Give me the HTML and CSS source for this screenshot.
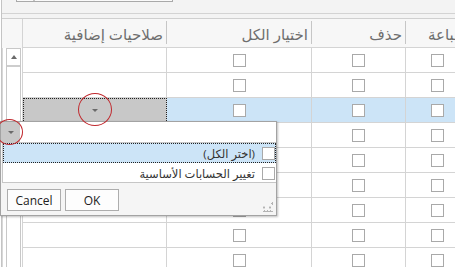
FILE: index.html
```html
<!DOCTYPE html>
<html lang="ar">
<head>
  <meta charset="UTF-8" />
  <title>صلاحيات المستخدم</title>
  <link rel="stylesheet" href="styles.css">
</head>
<body>
  <div class="editor">
    <div class="toolbar">
      <div class="search"><span class="search-btn"></span></div>
    </div>

    <div class="grid">
      <div class="side">
        <div class="side-head"></div>
        <div class="vscroll">
          <div class="vscroll-up"><span class="tri-up"></span></div>
        </div>
      </div>

      <div class="cols">
        <div class="row head">
          <div class="cell"><span class="rtl">صلاحيات إضافية</span></div>
          <div class="cell"><span class="rtl">اختيار الكل</span></div>
          <div class="cell"><span class="rtl">حذف</span></div>
          <div class="cell"><span class="rtl">طباعة</span></div>
        </div>
        <div class="row"><div class="cell"></div><div class="cell"><span class="check"></span></div><div class="cell"><span class="check"></span></div><div class="cell"><span class="check"></span></div></div>
        <div class="row"><div class="cell"></div><div class="cell"><span class="check"></span></div><div class="cell"><span class="check"></span></div><div class="cell"><span class="check"></span></div></div>
        <div class="row sel"><div class="cell drop"><span class="tri-down"></span></div><div class="cell"><span class="check"></span></div><div class="cell"><span class="check"></span></div><div class="cell"><span class="check"></span></div></div>
        <div class="row"><div class="cell"></div><div class="cell"><span class="check"></span></div><div class="cell"><span class="check"></span></div><div class="cell"><span class="check"></span></div></div>
        <div class="row"><div class="cell"></div><div class="cell"><span class="check"></span></div><div class="cell"><span class="check"></span></div><div class="cell"><span class="check"></span></div></div>
        <div class="row"><div class="cell"></div><div class="cell"><span class="check"></span></div><div class="cell"><span class="check"></span></div><div class="cell"><span class="check"></span></div></div>
        <div class="row"><div class="cell"></div><div class="cell"><span class="check"></span></div><div class="cell"><span class="check"></span></div><div class="cell"><span class="check"></span></div></div>
        <div class="row"><div class="cell"></div><div class="cell"><span class="check"></span></div><div class="cell"><span class="check"></span></div><div class="cell"><span class="check"></span></div></div>
        <div class="row"><div class="cell"></div><div class="cell"><span class="check"></span></div><div class="cell"><span class="check"></span></div><div class="cell"><span class="check"></span></div></div>
      </div>
    </div>

    <!-- filter dropdown of the first column -->
    <div class="popup">
      <div class="pop-edit">
        <div class="pop-btn"><span class="tri-down"></span></div>
      </div>
      <div class="pop-list">
        <div class="item sel"><span class="rtl">(اختر الكل)</span><span class="check"></span></div>
        <div class="item"><span class="rtl">تغيير الحسابات الأساسية</span><span class="check"></span></div>
      </div>
      <div class="pop-foot">
        <button class="btn">Cancel</button>
        <button class="btn">OK</button>
        <span class="grip"></span>
      </div>
    </div>

    <span class="mark mark-cell"></span>
    <span class="mark mark-btn"></span>
  </div>
</body>
</html>
```

FILE: styles.css
```css
* {
  box-sizing: border-box;
}

body {
  margin: 0;
  width: 455px;
  height: 267px;
  overflow: hidden;
  background: #fff;
  font-family: 'Segoe UI', 'Open Sans', 'DejaVu Sans', sans-serif;
}

.rtl {
  direction: rtl;
  white-space: nowrap;
}

.editor {
  position: relative;
  height: 267px;
  margin-left: 1px;
  border-left: 1px solid #c4c4c4;
  background: #f3f3f3;
}

/* top strip with the search box */
.toolbar {
  height: 14px;
  padding-left: 14px;
  border-bottom: 1px solid #d3d3d3;
}

.search {
  position: relative;
  width: 157px;
  height: 2px;
  background: #fafafa;
  border: 1px solid #a9a9a9;
  border-top: none;
}

.search-btn {
  position: absolute;
  left: 16px;
  top: 0;
  width: 2px;
  height: 1px;
  background: #c4c4c4;
}

/* grid */
.grid {
  display: flex;
  margin-top: 4px;
  border-top: 1px solid #cfcfcf;
  background: #fff;
}

.side {
  flex: none;
  width: 21px;
  border-right: 1px solid #d4d4d4;
  box-shadow: inset 1px 0 #d8d8d8;
}

.side-head {
  height: 29px;
  background: #f7f7f7;
}

.vscroll {
  width: 15px;
  height: 230px;
  margin-left: 4px;
  border: 1px solid #c8c8c8;
  background: #fff;
}

.vscroll-up {
  height: 18px;
  display: flex;
  align-items: center;
  justify-content: center;
  border-bottom: 2px solid #cdcdcd;
}

.tri-up {
  border-left: 3px solid transparent;
  border-right: 3px solid transparent;
  border-bottom: 4px solid #6a6a6a;
}

.tri-down {
  border-left: 3px solid transparent;
  border-right: 3px solid transparent;
  border-top: 3px solid #6a6a6a;
}

.cols {
  flex: 1;
  min-width: 0;
}

.row {
  display: grid;
  grid-template-columns: 144px 145px 94px 64px;
  height: 25px;
}

.cell {
  display: flex;
  align-items: center;
  justify-content: center;
  border-right: 1px solid #d4d4d4;
  border-bottom: 1px solid #d4d4d4;
}

.head {
  height: 29px;
  background: #f7f7f7;
}

.head .cell {
  position: relative;
  justify-content: flex-end;
  padding: 1px 4px 0 0;
  border-right: none;
  font-size: 15px;
  color: #6e6e6e;
}

.head .cell::after {
  content: '';
  position: absolute;
  right: 0;
  top: 2px;
  width: 1px;
  height: 23px;
  background: #c6c6c6;
}

.row.sel .cell {
  background: #cce4f7;
}

.row.sel .cell.drop {
  background: #c8c8c8;
  outline: 1px dotted #222;
  outline-offset: -1px;
}

.check {
  display: inline-block;
  width: 13px;
  height: 13px;
  border: 1px solid #a9a9a9;
  background: #fff;
}

/* filter popup */
.popup {
  position: absolute;
  left: -2px;
  top: 121px;
  width: 277px;
  height: 95px;
  display: flex;
  flex-direction: column;
  background: #f5f5f5;
  border: 1px solid #a3a3a3;
  box-shadow: 1px 1px 2px rgba(0, 0, 0, 0.25);
}

.pop-edit {
  height: 20px;
  display: flex;
  background: #fff;
}

.pop-btn {
  width: 19px;
  display: flex;
  align-items: center;
  justify-content: center;
  background: #c8c8c8;
}

.pop-list {
  margin-left: 1px;
  height: 41px;
  border: 1px solid #c6c6c6;
  border-right: none;
  background: #fff;
}

.item {
  height: 20px;
  display: flex;
  align-items: center;
  justify-content: flex-end;
  gap: 7px;
  padding-right: 1px;
  font-size: 11.5px;
  color: #333;
}

.item.sel {
  background: #cce4f7;
  outline: 1px dotted #222;
  outline-offset: -1px;
}

.pop-foot {
  position: relative;
  flex: 1;
  display: flex;
  align-items: flex-start;
  gap: 4px;
  padding: 6px 0 0 6px;
}

.btn {
  width: 54px;
  height: 22px;
  padding: 0;
  font-family: inherit;
  font-size: 12px;
  color: #222;
  background: #fdfdfd;
  border: 1px solid #adadad;
}

.grip {
  position: absolute;
  right: 3px;
  bottom: 3px;
  width: 10px;
  height: 10px;
  background:
    radial-gradient(circle, #b4b4b4 1px, transparent 1.2px) 8px 0 / 3px 3px no-repeat,
    radial-gradient(circle, #b4b4b4 1px, transparent 1.2px) 4px 4px / 6px 3px repeat-x,
    radial-gradient(circle, #b4b4b4 1px, transparent 1.2px) 0 8px / 3px 3px repeat-x;
}

/* red annotation circles */
.mark {
  position: absolute;
  border: 1px solid #c0282d;
  border-radius: 50%;
}

.mark-cell {
  left: 76px;
  top: 93px;
  width: 34px;
  height: 33px;
}

.mark-btn {
  left: -6px;
  top: 119px;
  width: 27px;
  height: 26px;
}
```
